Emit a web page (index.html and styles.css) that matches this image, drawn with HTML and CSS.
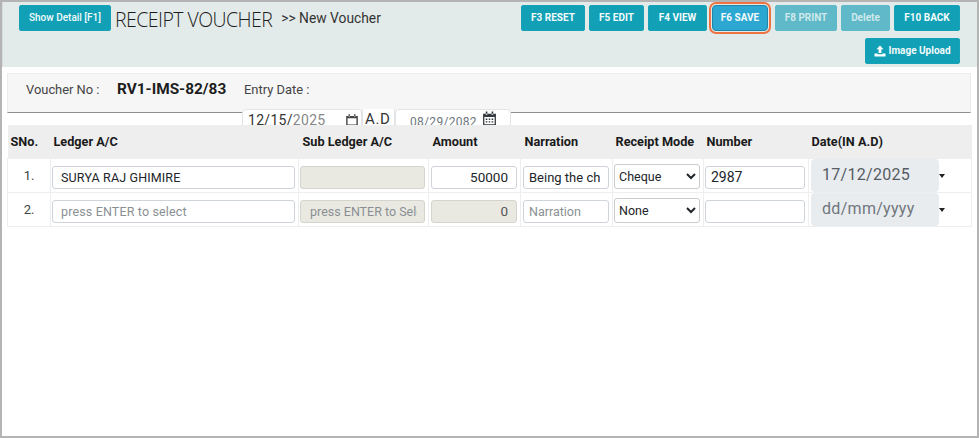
FILE: index.html
```html
<!DOCTYPE html>
<html lang="en">
<head>
<meta charset="utf-8">
<title>Receipt Voucher</title>
<link rel="stylesheet" href="styles.css">
</head>
<body>
<div class="frame">
  <header class="topbar">
    <div class="title-group">
      <button class="btn btn-detail">Show Detail [F1]</button>
      <h1 class="title">RECEIPT VOUCHER</h1>
      <span class="crumb">&gt;&gt; New Voucher</span>
    </div>
    <div class="actions">
      <div class="action-row">
        <button class="btn w-reset">F3 RESET</button>
        <button class="btn w-edit">F5 EDIT</button>
        <button class="btn w-view">F4 VIEW</button>
        <button class="btn btn-save">F6 SAVE</button>
        <button class="btn btn-off w-print">F8 PRINT</button>
        <button class="btn btn-off w-delete">Delete</button>
        <button class="btn w-back">F10 BACK</button>
      </div>
      <button class="btn btn-upload">
        <svg class="upload-icon" viewBox="0 0 12 12" aria-hidden="true"><path d="M6 0.5 9.5 4.2H7.4V8H4.6V4.2H2.5Z"/><path d="M0.5 8.6H3.6V9.3H8.4V8.6H11.5V11.5H0.5Z"/></svg>
        Image Upload
      </button>
    </div>
  </header>

  <section class="voucher">
    <span class="v-label">Voucher No :</span>
    <strong class="v-no">RV1-IMS-82/83</strong>
    <span class="v-entry">Entry Date :</span>
  </section>

  <div class="dates">
    <div class="date-box date-ad">
      <span>12/15/<span class="dim">2025</span></span>
      <svg class="cal" viewBox="0 0 12 12" aria-hidden="true"><path d="M1 2.5H11V11H1ZM2.2 4.6V9.8H9.8V4.6ZM3 1H4.2V3H3ZM7.8 1H9V3H7.8Z" fill-rule="evenodd"/></svg>
    </div>
    <span class="ad-tag">A.D</span>
    <div class="date-box date-bs">
      <span class="bs-text">08/29/2082</span>
      <svg class="cal cal-bs" viewBox="0 0 14 14" aria-hidden="true"><path d="M1 2.5H13V13.5H1ZM2.2 5.5V12.3H11.8V5.5ZM3.5 .5H5V3.5H3.5ZM9 .5H10.5V3.5H9ZM3.5 7H5V8.3H3.5ZM6.3 7H7.7V8.3H6.3ZM9 7H10.5V8.3H9ZM3.5 9.5H5V10.8H3.5ZM6.3 9.5H7.7V10.8H6.3ZM9 9.5H10.5V10.8H9Z" fill-rule="evenodd"/></svg>
    </div>
  </div>

  <table class="grid">
    <colgroup>
      <col class="c-sno"><col class="c-ledger"><col class="c-sub"><col class="c-amt"><col class="c-nar"><col class="c-mode"><col class="c-num"><col class="c-date">
    </colgroup>
    <thead>
      <tr>
        <th class="th-tight">SNo.</th><th class="th-tight">Ledger A/C</th><th>Sub Ledger A/C</th><th>Amount</th><th>Narration</th><th class="th-tight">Receipt Mode</th><th class="th-tight">Number</th><th class="th-tight">Date(IN A.D)</th>
      </tr>
    </thead>
    <tbody>
      <tr>
        <td class="sno">1.</td>
        <td><input class="field ledger" value="SURYA RAJ GHIMIRE"></td>
        <td><input class="field off sub" disabled></td>
        <td class="pad3"><input class="field right" value="50000"></td>
        <td class="pad3"><input class="field nar" value="Being the cheque received"></td>
        <td><select class="field pick"><option>Cheque</option></select></td>
        <td><input class="field num" value="2987"></td>
        <td class="dcell"><div class="ad-cell"><span class="ad-date">17/12/2025</span><span class="caret"></span></div></td>
      </tr>
      <tr>
        <td class="sno">2.</td>
        <td><input class="field ledger" placeholder="press ENTER to select"></td>
        <td><input class="field off sub" placeholder="press ENTER to Select" disabled></td>
        <td class="pad3"><input class="field off right" value="0" disabled></td>
        <td class="pad3"><input class="field nar" placeholder="Narration"></td>
        <td><select class="field pick"><option>None</option></select></td>
        <td><input class="field num"></td>
        <td class="dcell"><div class="ad-cell"><span class="ad-date muted">dd/mm/yyyy</span><span class="caret"></span></div></td>
      </tr>
    </tbody>
  </table>
</div>
</body>
</html>
```
FILE: styles.css
```css
* { box-sizing: border-box; }
html, body { margin: 0; height: 100%; }
body { background: #fff; font-family: Roboto, "Liberation Sans", sans-serif; color: #212529; overflow: hidden; }
.frame { width: 979px; height: 438px; border: 2px solid #b4b4b4; overflow: hidden; background: #fff; }

.topbar { display: flex; justify-content: space-between; height: 65px; background: #e3ebea; padding: 3px 17px 0 16px; border-left: 1px solid #d6dcdc; }
.title-group { display: flex; align-items: flex-start; }
.title { margin: 1px 0 0 4px; font: 300 19.5px/28px "Open Sans", sans-serif; color: #1c1c1c; letter-spacing: -.55px; white-space: nowrap; }
.crumb { margin: 4px 0 0 9px; font-size: 13.8px; line-height: 18px; color: #333; white-space: nowrap; }

.btn { display: block; height: 26px; padding: 0; border: 1px solid #17a2b8; border-radius: 2px; background: #11a0b5; color: #f2fbfc; font: 700 10px/24px Roboto, sans-serif; text-align: center; white-space: nowrap; }
.btn-detail { width: 92px; font-weight: 500; }
.actions { display: flex; flex-direction: column; align-items: flex-end; gap: 7px; }
.action-row { display: flex; gap: 4px; }
.w-reset { width: 64px; }
.w-edit { width: 55px; }
.w-view { width: 59px; }
.btn-save { width: 56px; margin: 0 4px 0 1px; background: #2ba7d2; border-color: #1f86a8; box-shadow: 0 0 0 1px #e3ebea, 0 0 0 3px #ee7342; border-radius: 4px; }
.btn-off { background: #5fb9c8; border-color: #5fb9c8; color: #cfe9ed; }
.w-print { width: 62px; margin-left: -1px; }
.w-delete { width: 49px; }
.w-back { width: 66px; }
.btn-upload { display: flex; align-items: center; justify-content: center; gap: 2px; width: 95px; }
.upload-icon { width: 12px; height: 12px; fill: #fff; }

.voucher { display: flex; align-items: center; margin: 6px 6px 0 5px; height: 40px; padding: 0 0 8px 18px; background: #f6f6f6; border: 1px solid #ececec; border-bottom: 1px solid #8e8e8e; font-size: 12.9px; color: #444; }
.v-label { width: 91px; }
.v-no { width: 127px; font-size: 15.4px; font-weight: 700; color: #1d1d1d; }
.v-entry { white-space: nowrap; }

.dates { display: flex; height: 16px; margin: -4px 0 0 240px; overflow: hidden; position: relative; }
.date-box { display: flex; justify-content: space-between; height: 24px; background: #fff; border: 1px solid #e2e5e8; border-radius: 4px 4px 0 0; }
.date-ad { width: 120px; padding: 2px 2px 0 5px; font-size: 14px; letter-spacing: .3px; color: #333; }
.dim { color: #888; }
.ad-tag { width: 33px; padding: 1px 0 0 2px; font-size: 15px; letter-spacing: .6px; color: #333; background: #fff; border-left: 1px solid #e2e5e8; border-right: 1px solid #e2e5e8; text-align: left; }
.date-bs { width: 116px; padding: 5px 13px 0 14px; font-size: 12px; color: #6c757d; letter-spacing: .3px; }
.cal { width: 14px; height: 14px; margin-top: 1px; fill: #444; flex: none; }
.cal-bs { width: 15px; height: 15px; margin-top: -4px; fill: #33393f; }

.grid { width: 964px; margin-left: 5px; table-layout: fixed; border-collapse: collapse; font-size: 12.7px; }
.c-sno { width: 43px; } .c-ledger { width: 248px; } .c-sub { width: 130px; } .c-amt { width: 92px; }
.c-nar { width: 92px; } .c-mode { width: 91px; } .c-num { width: 105px; } .c-date { width: 163px; }
th { height: 33px; padding: 0 0 0 4px; background: #eee; font-weight: 700; font-size: 12.7px; text-align: left; color: #1a1a1a; white-space: nowrap; overflow: visible; }
th.th-tight { padding-left: 3px; }
td { height: 34px; padding: 7px 3px 0 1px; border: 1px solid #eceeef; background: #fff; vertical-align: top; }
td.pad3 { padding-left: 2px; }
td.sno { text-align: center; padding: 8px 0 0; font-size: 13px; line-height: 17px; color: #444; }
td.dcell { padding: 0 0 0 2px; }
.field { display: block; width: 100%; height: 23px; padding: 0 6px; border: 1px solid #ced4da; border-radius: 3px; background: #fff; font: 12.5px Roboto, sans-serif; color: #212529; outline: 0; }
.field::placeholder { color: #8a8f94; opacity: 1; }
.ledger { padding-left: 8px; letter-spacing: .15px; }
.sub { padding: 0 7px 0 9px; }
.off, .field:disabled { background: #e9e9e1; border-color: #d5d5ce; }
.right { text-align: right; padding-right: 8px; font-size: 13.5px; }
.field.off.right { color: #555; }
.nar { padding: 0 8px 0 5px; font-size: 13px; }
.nar::placeholder { font-size: 12.5px; }
.num { font-size: 14px; padding-left: 5px; }
.pick { height: 25px; margin-top: -2px; padding: 0; border-color: #ccc; font-size: 12.5px; }
.ad-cell { display: flex; align-items: center; height: 33px; }
.ad-date { display: block; width: 128px; height: 33px; padding-left: 11px; border-radius: 4px; background: #e9ecef; font-size: 16px; line-height: 31px; color: #555c63; letter-spacing: .3px; }
.ad-date.muted { color: #6f767d; }
.caret { margin: 2px 0 0; border: 3.5px solid transparent; border-top: 4px solid #222; border-bottom: 0; width: 0; height: 0; }
```
